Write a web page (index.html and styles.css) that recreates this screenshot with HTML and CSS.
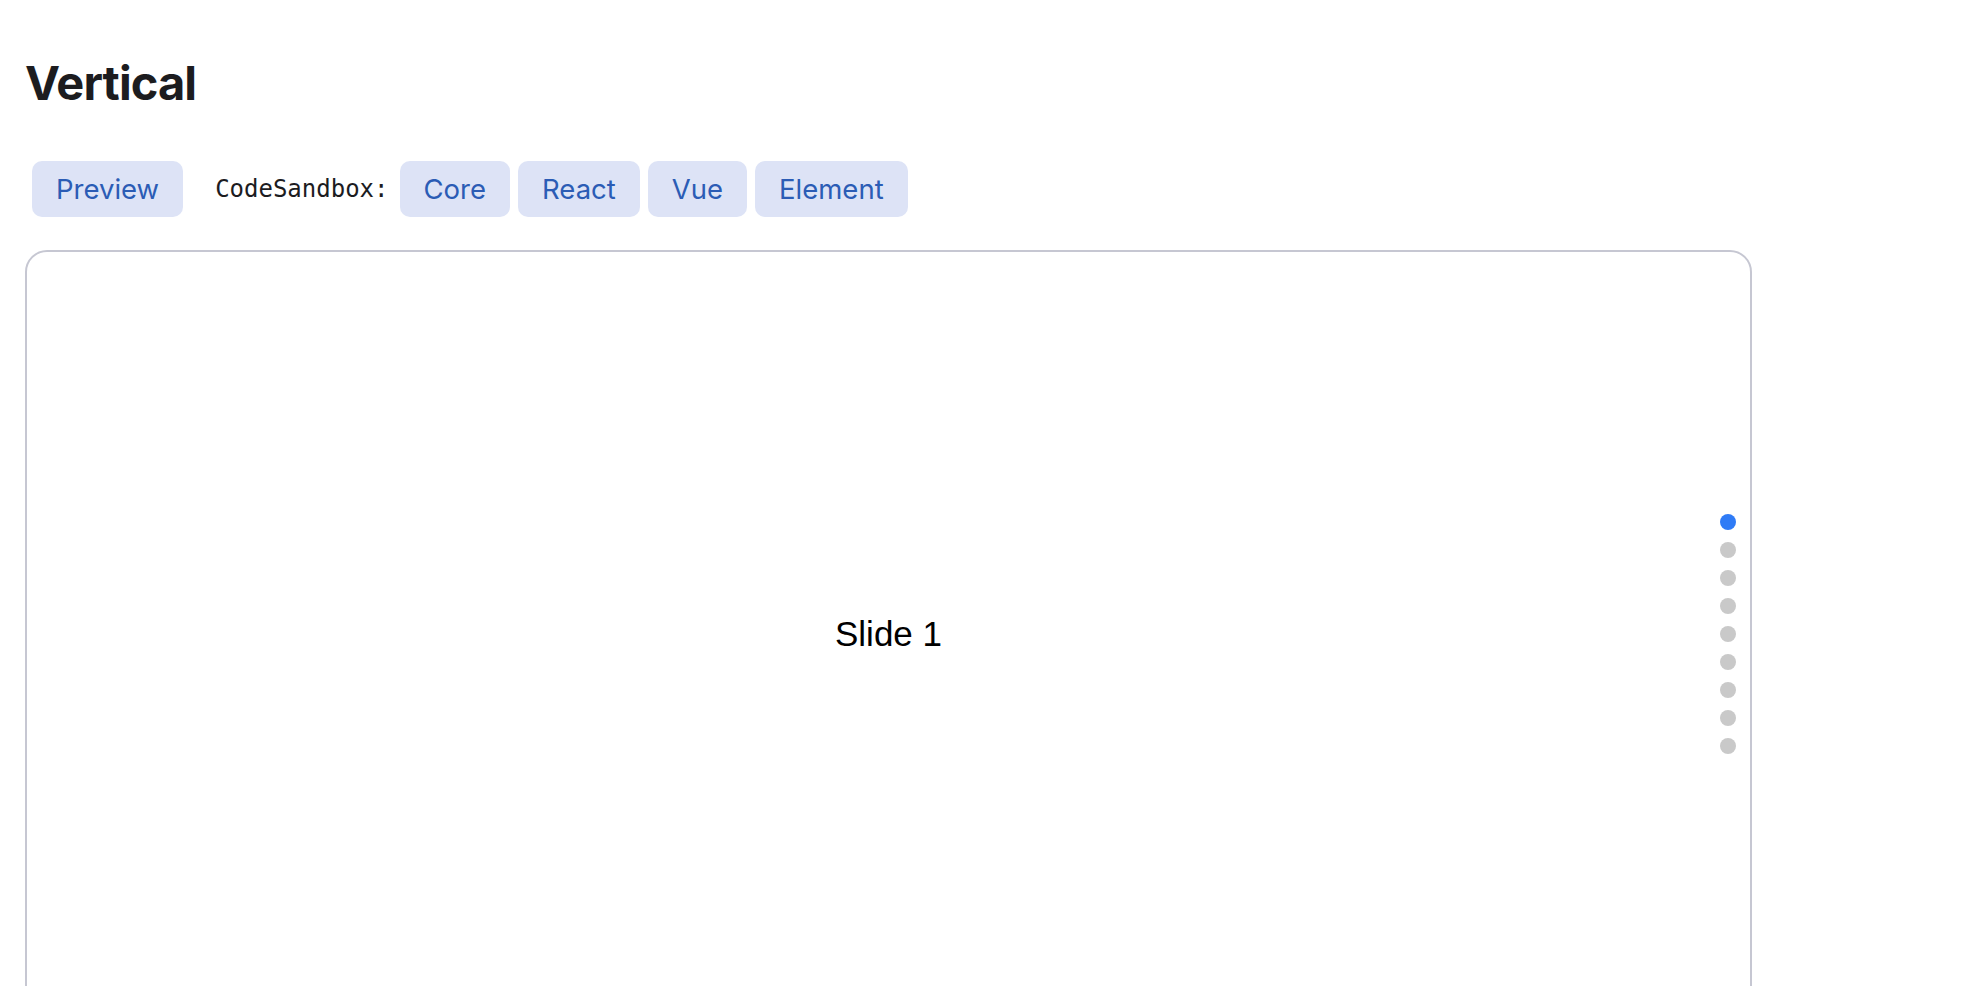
FILE: index.html
```html
<!DOCTYPE html>
<html lang="en">
<head>
    <meta charset="UTF-8" />
    <meta name="viewport" content="width=device-width, initial-scale=1.0" />
    <title>Vertical</title>
    <link rel="stylesheet" href="styles.css">
</head>
<body>
    <h1 class="title">Vertical</h1>

    <!-- demo links -->
    <div class="toolbar">
        <a class="btn" href="#">Preview</a>
        <span class="label">CodeSandbox:</span>
        <a class="btn" href="#">Core</a>
        <a class="btn" href="#">React</a>
        <a class="btn" href="#">Vue</a>
        <a class="btn" href="#">Element</a>
    </div>

    <!-- slider frame -->
    <div class="frame">
        <div class="slide">Slide 1</div>
        <div class="pagination">
            <span class="dot active"></span>
            <span class="dot"></span>
            <span class="dot"></span>
            <span class="dot"></span>
            <span class="dot"></span>
            <span class="dot"></span>
            <span class="dot"></span>
            <span class="dot"></span>
            <span class="dot"></span>
        </div>
    </div>
</body>
</html>
```

FILE: styles.css
```css
html, body {
    margin: 0;
    padding: 0;
    background: #fff;
}
body {
    padding: 0 25px;
    font-family: Inter, "Liberation Sans", sans-serif;
    color: #1c1c1f;
    overflow: hidden;
}
.title {
    margin: 0;
    padding-top: 54px;
    font-size: 47px;
    line-height: 58px;
    font-weight: 700;
    letter-spacing: -0.9px;
}
/* buttons row */
.toolbar {
    display: flex;
    align-items: center;
    gap: 8px;
    margin-top: 49px;
    padding-left: 7px;
}
.btn {
    display: block;
    padding: 10px 24px;
    line-height: 36px;
    font-size: 27.5px;
    color: #2b5cb5;
    background: #dde3f6;
    border-radius: 10px;
    text-decoration: none;
}
.label {
    margin: 0 3px 0 24px;
    font-family: "DejaVu Sans Mono", monospace;
    font-size: 24px;
    color: #1c1c1f;
}
/* slider */
.frame {
    position: relative;
    margin-top: 33px;
    width: 1727px;
    height: 768px;
    box-sizing: border-box;
    border: 2px solid #c6c7d2;
    border-radius: 22px;
    display: flex;
    align-items: center;
    justify-content: center;
}
.slide {
    font-family: "Liberation Sans", Arial, sans-serif;
    font-size: 35px;
    color: #000;
}
.pagination {
    position: absolute;
    right: 14px;
    top: 50%;
    transform: translateY(-50%);
    display: flex;
    flex-direction: column;
    gap: 12px;
}
.dot {
    display: block;
    width: 16px;
    height: 16px;
    border-radius: 50%;
    background: #c9c9c9;
}
.dot.active {
    background: #2f7bf6;
}
```
